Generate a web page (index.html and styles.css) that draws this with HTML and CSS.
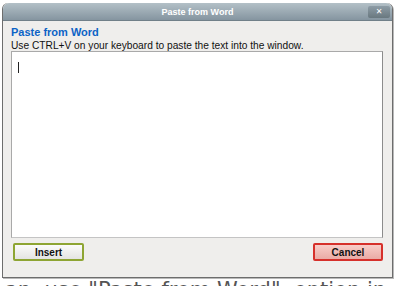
FILE: index.html
```html
<!DOCTYPE html>
<html>
<head>
  <title>Paste from Word</title>
  <meta name="viewport" content="width=device-width, initial-scale=1.0">
  <link rel="stylesheet" href="styles.css">
</head>
<body>

  <div class="dialog">
    <div class="titlebar">
      <span class="title">Paste from Word</span>
      <span class="close">&#x2715;</span>
    </div>
    <div class="content">
      <h2>Paste from Word</h2>
      <p class="hint">Use CTRL+V on your keyboard to paste the text into the window.</p>
      <div class="pastebox"><span class="caret"></span></div>
      <div class="buttons">
        <button class="btn insert">Insert</button>
        <button class="btn cancel">Cancel</button>
      </div>
    </div>
  </div>

  <p class="behind">an &nbsp;use "Paste from Word" &nbsp;option in</p>

</body>
</html>
```

FILE: styles.css
```css
body {
  margin: 0;
  padding: 3px 0 0 2px;
  background: #fff;
  font-family: "Liberation Sans", Arial, sans-serif;
  overflow: hidden;
  height: 283px;
}
.dialog {
  width: 389px;
  border: 1px solid #6d6d6d;
  border-top: none;
  border-radius: 6px 6px 0 0;
  background: #efeeec;
  box-shadow: 1px 1px 0 #b9b9b9;
}
.titlebar {
  height: 17px;
  background: linear-gradient(#b3c0c7, #8595a0);
  border-radius: 6px 6px 0 0;
  border-bottom: 1px solid #718089;
  display: flex;
  align-items: center;
  justify-content: center;
  position: relative;
}
.title {
  color: #fff;
  font-weight: bold;
  font-size: 9px;
}
.close {
  position: absolute;
  right: 2px;
  top: 3px;
  width: 22px;
  height: 12px;
  border-radius: 2px;
  background: linear-gradient(#8d9ca6, #69787f);
  color: #fff;
  font-family: "DejaVu Sans", sans-serif;
  font-size: 8px;
  font-weight: bold;
  line-height: 12px;
  text-align: center;
}
.content {
  padding: 4px 9px 16px 8px;
}
h2 {
  margin: 0;
  color: #0c63c6;
  font-size: 11px;
  font-weight: bold;
  line-height: 15px;
}
.hint {
  margin: 0;
  font-size: 10.2px;
  color: #111;
  line-height: 11px;
}
.pastebox {
  height: 185px;
  background: #fff;
  border: 1px solid #a9a9a9;
  border-right-color: #8c8c8c;
  border-bottom-color: #c4c4c4;
}
.caret {
  display: block;
  width: 1px;
  height: 11px;
  background: #222;
  margin: 10px 0 0 6px;
}
.buttons {
  display: flex;
  justify-content: space-between;
  padding: 5px 0 0 2px;
}
.btn {
  width: 71px;
  height: 18px;
  font-family: "Liberation Sans", Arial, sans-serif;
  font-size: 10px;
  font-weight: bold;
  color: #111;
  border-radius: 2px;
  padding: 0;
  cursor: pointer;
}
.insert {
  border: 2px solid #8ea533;
  background: linear-gradient(#fbfbfa, #e4e4e2);
}
.cancel {
  width: 70px;
  border: 2px solid #d6302b;
  background: linear-gradient(#f8cdc9, #eaaaa5);
}
.behind {
  margin: 2px 0 0 3px;
  font-family: "DejaVu Sans", sans-serif;
  font-size: 21px;
  line-height: 21px;
  color: #555;
  white-space: nowrap;
}
```
